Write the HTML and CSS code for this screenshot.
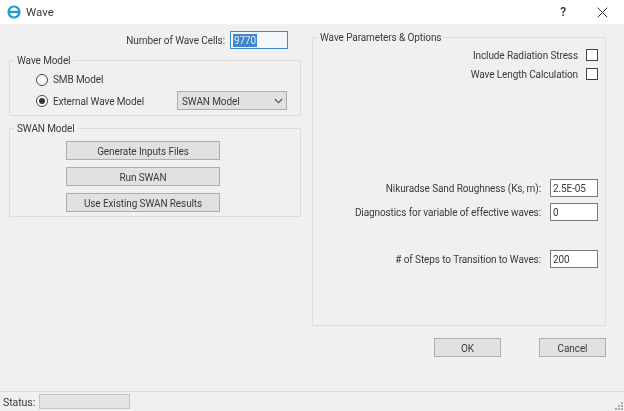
FILE: index.html
```html
<!DOCTYPE html>
<html lang="en">
<head>
<meta charset="utf-8">
<title>Wave</title>
<link rel="stylesheet" href="styles.css">
</head>
<body>
<div class="window">
  <header class="titlebar">
    <svg class="app-icon" width="14" height="14" viewBox="0 0 14 14"><circle cx="7" cy="7" r="5.5" fill="none" stroke="#1f9bd1" stroke-width="2.2"/><rect x="1.5" y="5.8" width="11" height="2.4" fill="#1f9bd1"/></svg>
    <span class="title">Wave</span>
    <span class="help">?</span>
    <svg class="close" width="11" height="11" viewBox="0 0 11 11"><path d="M0.7 0.7L10.3 10.3M10.3 0.7L0.7 10.3" stroke="#333" stroke-width="1" fill="none"/></svg>
  </header>
  <main class="content">
    <div class="columns">
      <div class="left">
        <div class="cells-row">
          <label class="label">Number of Wave Cells:</label>
          <div class="input cells-input"><span class="selected">9770</span></div>
        </div>
        <fieldset class="group wave-model">
          <legend>Wave Model</legend>
          <div class="radio-row"><span class="radio"></span><span>SMB Model</span></div>
          <div class="radio-row second">
            <span class="radio checked"></span><span class="radio-text">External Wave Model</span>
            <div class="select"><span>SWAN Model</span>
              <svg width="9" height="6" viewBox="0 0 9 6"><path d="M0.8 1L4.5 4.7L8.2 1" fill="none" stroke="#555" stroke-width="1.1"/></svg>
            </div>
          </div>
        </fieldset>
        <fieldset class="group swan-model">
          <legend>SWAN Model</legend>
          <div class="swan-buttons">
            <div class="button swan-button">Generate Inputs Files</div>
            <div class="button swan-button">Run SWAN</div>
            <div class="button swan-button">Use Existing SWAN Results</div>
          </div>
        </fieldset>
      </div>
      <fieldset class="group options">
        <legend>Wave Parameters &amp; Options</legend>
        <div class="check-row first-check"><span>Include Radiation Stress</span><span class="checkbox"></span></div>
        <div class="check-row"><span>Wave Length Calculation</span><span class="checkbox"></span></div>
        <div class="field-row roughness"><span>Nikuradse Sand Roughness (Ks, m):</span><div class="input field-input">2.5E-05</div></div>
        <div class="field-row diagnostics"><span>Diagnostics for variable of effective waves:</span><div class="input field-input">0</div></div>
        <div class="field-row steps"><span># of Steps to Transition to Waves:</span><div class="input field-input">200</div></div>
      </fieldset>
    </div>
    <div class="actions">
      <div class="button action">OK</div>
      <div class="button action">Cancel</div>
    </div>
  </main>
  <footer class="statusbar">
    <span class="status-label">Status:</span>
    <div class="status-box"></div>
    <svg class="grip" width="10" height="10" viewBox="0 0 10 10"><g fill="#a8a8a8"><rect x="7" y="1" width="2" height="2"/><rect x="4" y="4" width="2" height="2"/><rect x="7" y="4" width="2" height="2"/><rect x="1" y="7" width="2" height="2"/><rect x="4" y="7" width="2" height="2"/><rect x="7" y="7" width="2" height="2"/></g></svg>
  </footer>
</div>
</body>
</html>
```
FILE: styles.css
```css
* { box-sizing: border-box; }
html, body { margin: 0; padding: 0; background: #f0f0f0; }
body { width: 624px; height: 411px; overflow: hidden; }
.window {
  width: 624px; height: 411px; display: flex; flex-direction: column;
  font-family: Roboto, "Liberation Sans", sans-serif; font-size: 10px; letter-spacing: -0.1px; line-height: 14px; color: #3a3a3a;
  background: #f0f0f0; filter: blur(0.35px);
}
.titlebar { height: 24px; background: #fff; display: flex; align-items: center; padding-left: 7px; flex: none; }
.app-icon { flex: none; }
.title { margin-left: 5px; font-size: 11.5px; letter-spacing: 0; }
.help { margin-left: auto; font-size: 12px; font-weight: 600; color: #333; }
.close { margin-left: 31px; margin-right: 16px; }
.content { flex: 1; padding: 0 18px 0 9px; display: flex; flex-direction: column; }
.columns { display: flex; gap: 11px; align-items: flex-start; }
.left { width: 292px; flex: none; }
.cells-row { display: flex; justify-content: flex-end; align-items: center; margin-top: 7px; padding-right: 13px; gap: 5px; height: 18px; }
.label { padding-top: 2px; }
.input { background: #fff; border: 1px solid #7a7a7a; height: 18px; display: flex; align-items: center; padding: 2px 0 0 2px; }
.cells-input { width: 58px; background: #f4f7f9; border: 1px solid #3b8fc6; padding-top: 0; }
.selected { background: #3f86cf; color: #dfe9f5; line-height: 13px; height: 13px; padding: 0 1px; }
.group { border: 1px solid #dcdcdc; margin: 0; padding: 0; min-width: 0; }
.group legend { margin-left: 4px; padding: 0 3px; height: 14px; line-height: 16px; }
.wave-model { height: 63px; margin-top: 4px; }
.radio-row { display: flex; align-items: center; height: 16px; margin-top: 5px; padding-left: 26px; gap: 5px; }
.radio-row.second { height: 19px; margin-top: 3px; }
.radio-text { width: 119px; flex: none; padding-top: 2px; }
.radio { width: 12px; height: 12px; border-radius: 50%; border: 1px solid #444; background: #fff; flex: none; display: flex; align-items: center; justify-content: center; }
.radio.checked::before { content: ""; width: 6px; height: 6px; border-radius: 50%; background: #333; }
.select { width: 110px; height: 19px; background: #e1e1e1; border: 1px solid #adadad; display: flex; align-items: center; justify-content: space-between; padding: 0 3px 0 4px; flex: none; }
.select > span { padding-top: 2px; }
.swan-model { height: 96px; margin-top: 5px; }
.swan-buttons { display: flex; flex-direction: column; gap: 7px; padding: 6px 0 0 56px; }
.button { background: #e1e1e1; border: 1px solid #adadad; display: flex; align-items: center; justify-content: center; padding-top: 2px; }
.swan-button { width: 154px; height: 19px; }
.options { width: 294px; height: 296px; margin-top: 6px; flex: none; }
.check-row { display: flex; justify-content: flex-end; align-items: center; gap: 8px; padding-right: 7px; height: 12px; margin-top: 7px; }
.check-row > span:first-child { padding-top: 2px; }
.first-check { margin-top: 5px; }
.checkbox { width: 12px; height: 12px; background: #fff; border: 1px solid #444; flex: none; }
.field-row { display: flex; justify-content: flex-end; align-items: center; gap: 9px; padding-right: 7px; height: 18px; }
.field-row > span { padding-top: 2px; }
.field-input { width: 48px; flex: none; }
.roughness { margin-top: 99px; }
.diagnostics { margin-top: 6px; }
.steps { margin-top: 29px; }
.actions { display: flex; justify-content: flex-end; gap: 38px; margin-top: 12px; }
.action { width: 67px; height: 19px; }
.statusbar { height: 20px; flex: none; border-top: 1px solid #dcdcdc; display: flex; align-items: center; padding-left: 3px; }
.status-label { width: 36px; flex: none; padding-top: 2px; font-size: 10.6px; }
.status-box { width: 91px; height: 15px; background: #e4e4e4; border: 1px solid #c4c4c4; }
.grip { margin-left: auto; align-self: flex-end; }
```
